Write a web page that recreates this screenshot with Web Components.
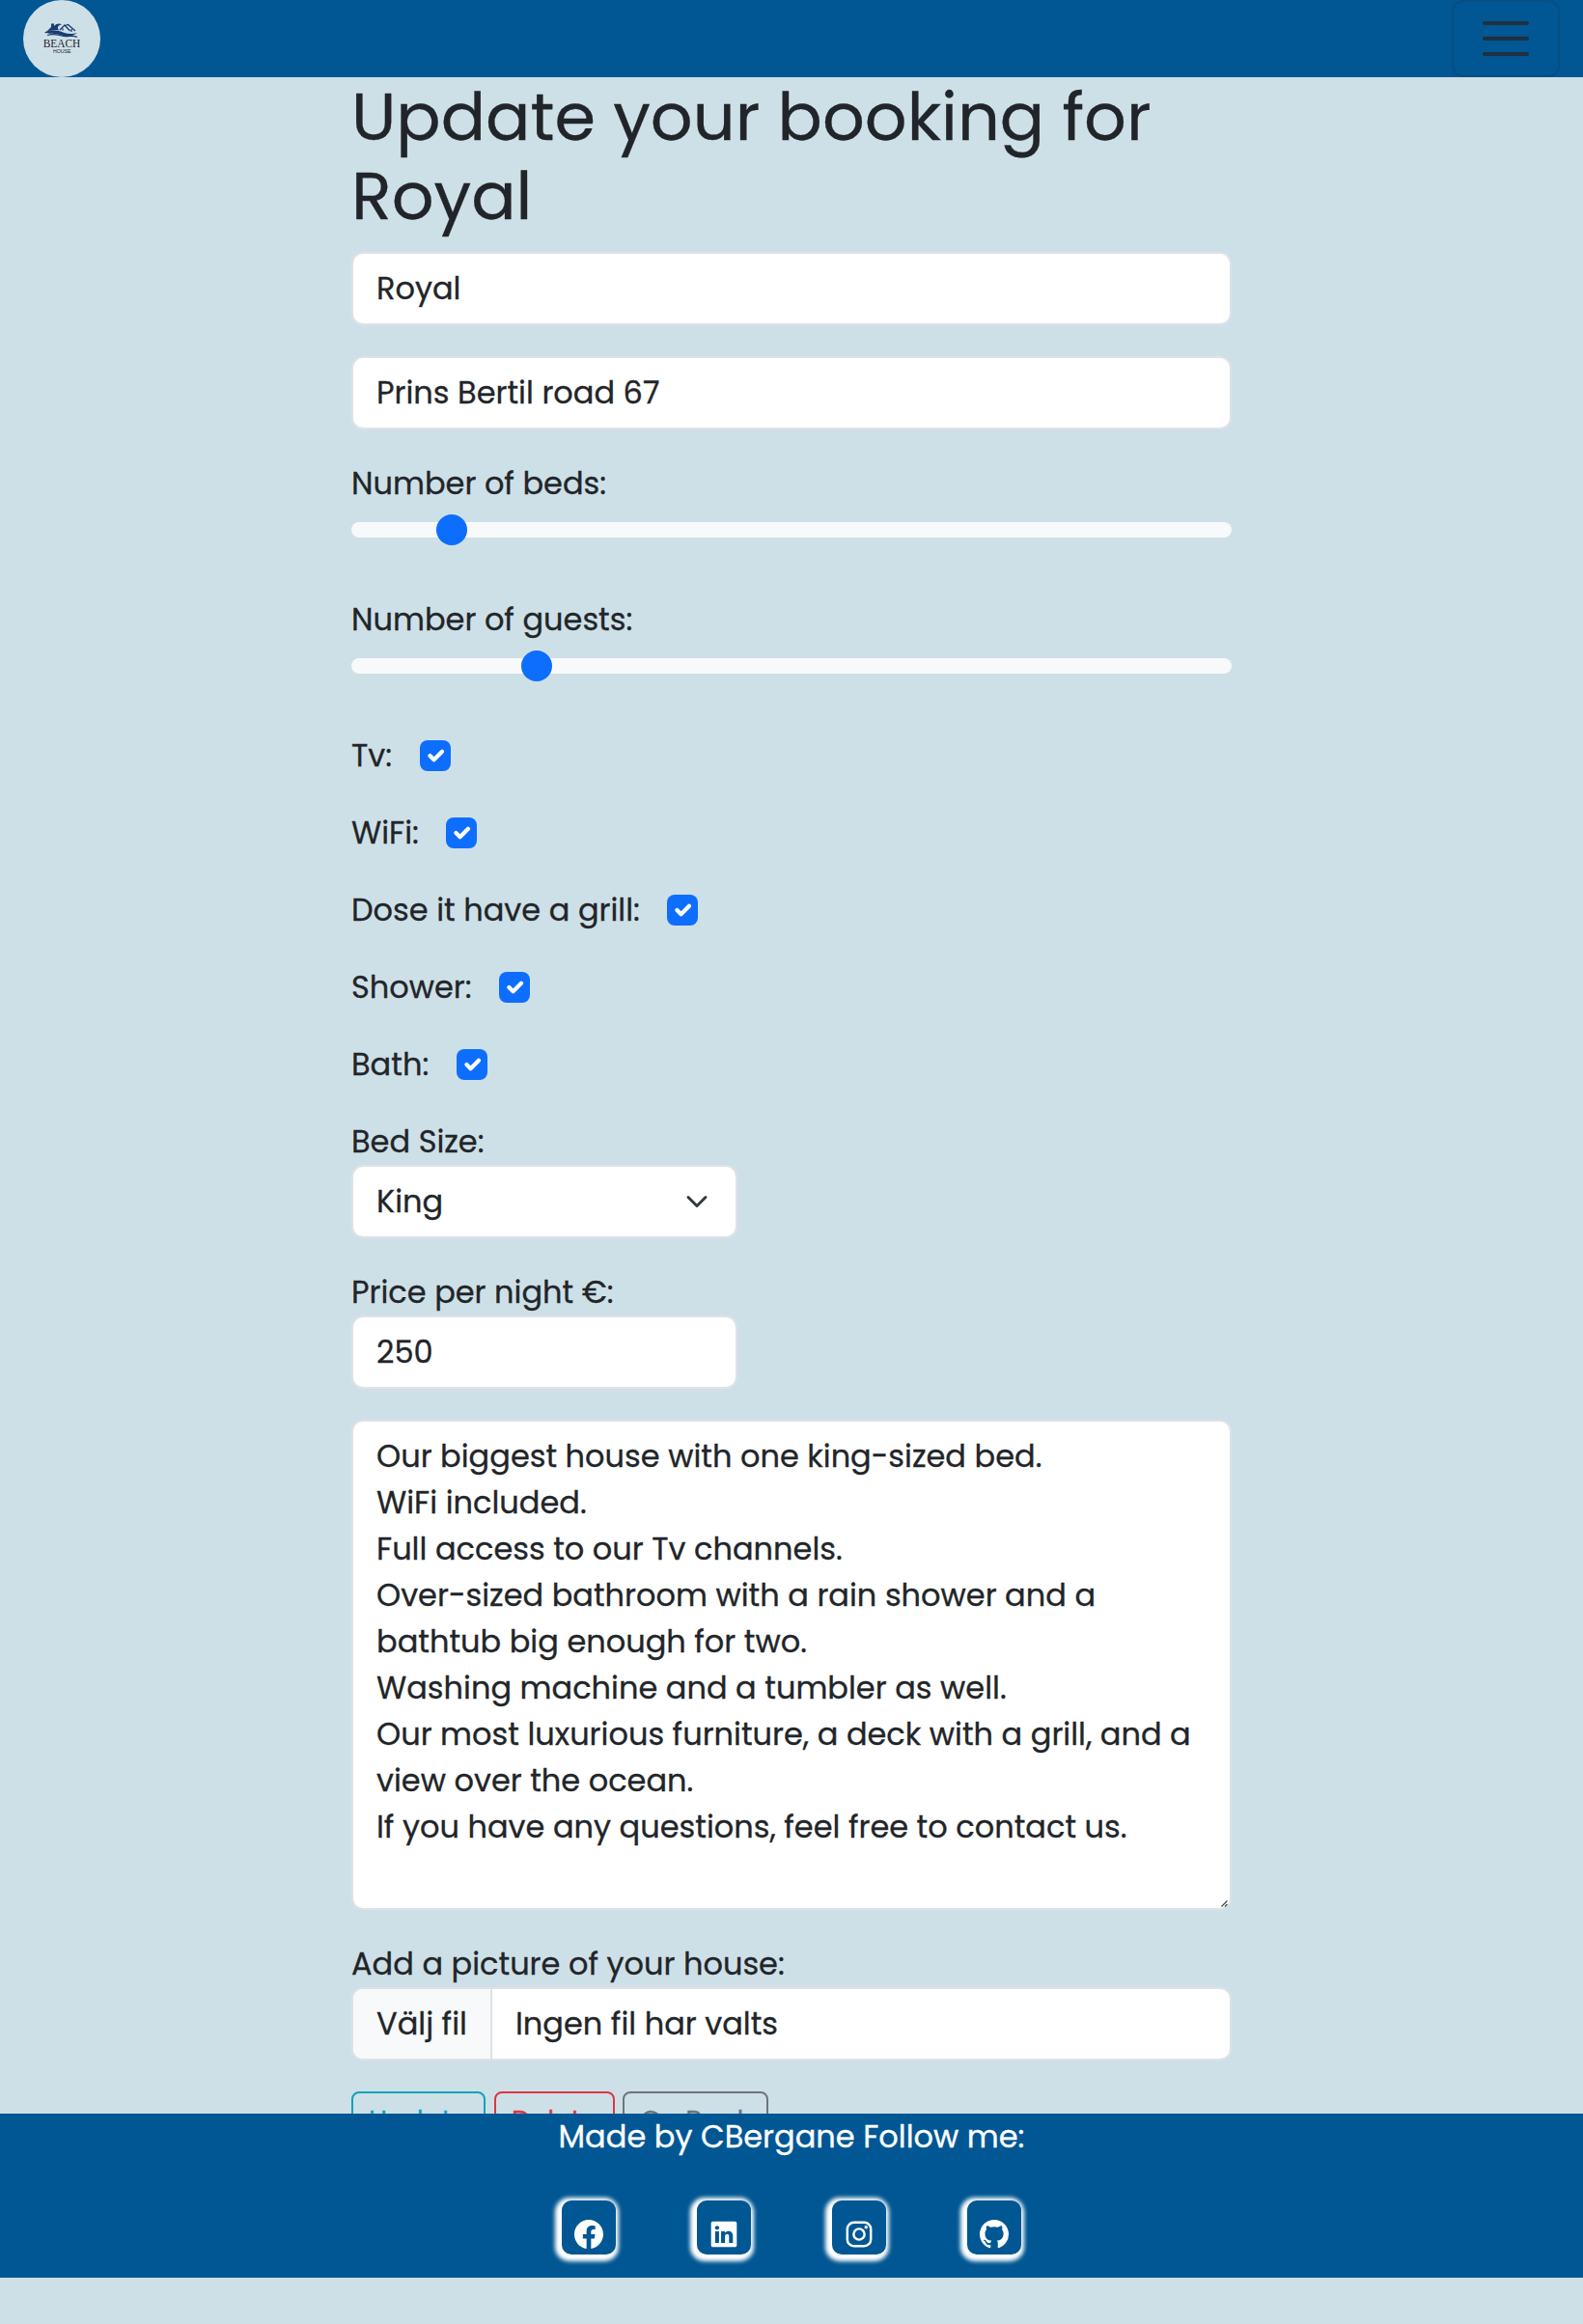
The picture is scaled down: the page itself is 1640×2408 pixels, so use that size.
<!DOCTYPE html>
<html lang="en">
<head>
<meta charset="utf-8">
<title>Beach House</title>
<style>
  html, body { margin: 0; background: #cee0e7; }
  body {
    font: 400 32px/48px Poppins, Inter, "Liberation Sans", sans-serif;
    -webkit-text-stroke: .3px currentColor;
    color: #212529;
    height: 2408px;
    overflow: hidden;
  }
</style>
</head>
<body>
<beach-page></beach-page>
<script>
const define = (name, html, init) => {
  const tpl = document.createElement('template');
  tpl.innerHTML = html;
  customElements.define(name, class extends HTMLElement {
    constructor() {
      super();
      this.attachShadow({ mode: 'open' }).append(tpl.content.cloneNode(true));
    }
    connectedCallback() { if (init) init.call(this, this.shadowRoot); }
  });
};

define('brand-logo', `<style>
  :host { display: block; width: 80px; height: 80px; border-radius: 50%; background: #cee0e7; }
  svg { display: block; }
  text { -webkit-text-stroke: 0; }
</style>
<svg width="80" height="80" viewBox="0 0 80 80">
  <path fill="#1b3c73" d="M24 33L29 28V24.500H32V27C35 24 38 24 40 25.500C36 26 34.500 29 37.500 31.500C33 30.500 28 31 24 33Z"/>
  <path fill="none" stroke="#1b3c73" stroke-width="1.300" d="M38 31L43 26L48.500 32M44.500 26.200L46.500 25.500L54 32M41 29.500v2M50 30v3"/>
  <path fill="#1b3c73" d="M22 33.500C30 29.500 37 32 42 33.800C47 35.500 52 35.500 56 34C50 39 43 37.500 37 35.700C31 34 26 36 22 33.500Z"/>
  <path fill="none" stroke="#1b3c73" stroke-width="1.200" d="M25 36.500C32 34 37 36.500 42 37.500C47 38.300 52 36 56 38.500"/>
  <text x="20.800" y="49" font-family="Liberation Serif" font-size="12" fill="#1b222b" textLength="38.500" lengthAdjust="spacingAndGlyphs">BEACH</text>
  <text x="31" y="54.700" font-family="Liberation Sans" font-size="5.500" fill="#1b222b" textLength="18.500" lengthAdjust="spacingAndGlyphs">HOUSE</text>
</svg>`);

define('menu-toggler', `<style>
  :host { display: flex; flex-direction: column; align-items: center; justify-content: center; gap: 12px;
    width: 112px; height: 80px; box-sizing: border-box; border: 2px solid #044f84; border-radius: 12px; }
  i { display: block; width: 48px; height: 4px; border-radius: 2px; background: #1f303f; }
</style><i></i><i></i><i></i>`);

define('nav-bar', `<style>
  :host { display: flex; justify-content: space-between; height: 80px; padding: 0 24px; background: #005793; }
</style><brand-logo></brand-logo><menu-toggler></menu-toggler>`);

define('form-label', `<style>
  :host { display: block; white-space: nowrap; }
</style><slot></slot>`);

define('form-control', `<style>
  :host { display: flex; align-items: center; justify-content: space-between; box-sizing: border-box; height: 76px;
    padding: 0 24px; background: #fff; border: 2px solid #dee2e6; border-radius: 12px; }
  :host([small]) { width: 400px; }
  svg { display: none; margin-right: 4px; }
  :host([select]) svg { display: block; }
</style><span><slot></slot></span>
<svg width="24" height="24" viewBox="0 0 16 16" fill="none" stroke="#343a40" stroke-width="2" stroke-linecap="round" stroke-linejoin="round"><path d="m2 5 6 6 6-6"/></svg>`);

define('form-range', `<style>
  :host { display: block; height: 141px; }
  .box { display: flex; align-items: center; height: 48px; }
  .track { display: flex; align-items: center; width: 100%; height: 16px; border-radius: 16px; background: #f8f9fa; }
  .thumb { width: 32px; height: 32px; border-radius: 50%; background: #0d6efd; }
</style><form-label><slot></slot></form-label><div class="box"><div class="track"><div class="thumb"></div></div></div>`, function (root) {
  root.querySelector('.thumb').style.marginLeft = this.getAttribute('value') + 'px';
});

define('form-check', `<style>
  :host { display: flex; align-items: center; height: 48px; margin-bottom: 32px; }
  .label { flex: none; white-space: nowrap; }
  .box { box-sizing: border-box; width: 32px; height: 32px; padding: 2px; border-radius: 8px; background: #0d6efd; }
  svg { display: block; }
</style><div class="label"><slot></slot></div>
<div class="box"><svg width="28" height="28" viewBox="0 0 20 20" fill="none" stroke="#fff" stroke-width="3" stroke-linecap="round" stroke-linejoin="round"><path d="m6 10 3 3 6-6"/></svg></div>`, function (root) {
  root.querySelector('.label').style.width = this.getAttribute('label-width') + 'px';
});

define('text-area', `<style>
  :host { display: flex; justify-content: space-between; box-sizing: border-box; height: 508px; padding: 12px 0 0 24px;
    background: #fff; border: 2px solid #dee2e6; border-radius: 12px; }
  .text { white-space: pre-line; }
  svg { align-self: flex-end; margin: 0 2px 1px 0; }
</style><div class="text"><slot></slot></div>
<svg width="7" height="7" viewBox="0 0 7 7" stroke="#444" stroke-width="1.200"><path d="M.5 6.500 6.500.5M4 6.500 6.500 4"/></svg>`);

define('file-input', `<style>
  :host { display: flex; box-sizing: border-box; height: 76px; background: #fff; border: 2px solid #dee2e6;
    border-radius: 12px; }
  .pick { box-sizing: border-box; width: 144px; padding: 12px 0 12px 24px; background: #f8f9fa; white-space: nowrap;
    border-right: 2px solid #dee2e6; border-radius: 10px 0 0 10px; }
  .name { padding: 12px 24px; }
</style><div class="pick"><slot name="pick"></slot></div><div class="name"><slot></slot></div>`);

define('outline-button', `<style>
  :host { display: block; box-sizing: border-box; height: 62px; padding: 8px 0; border: 2px solid var(--c);
    border-radius: 8px; color: var(--c); font-size: 28px; line-height: 42px; text-align: center; white-space: nowrap; }
</style><slot></slot>`, function () {
  this.style.width = this.getAttribute('width') + 'px';
});

define('booking-form', `<style>
  :host { display: block; width: 912px; margin: 0 auto; }
  h1 { margin: 0 0 17px; font-size: 68.600px; line-height: 82px; font-weight: 400; }
  form-control, text-area, file-input { margin-bottom: 32px; }
  .buttons { display: flex; }
  .buttons :nth-child(2) { margin: 0 8px 0 9px; }
</style>
<h1>Update your booking for Royal</h1>
<form-control>Royal</form-control>
<form-control>Prins Bertil road 67</form-control>
<form-range value="88">Number of beds:</form-range>
<form-range value="176">Number of guests:</form-range>
<form-check label-width="71">Tv:</form-check>
<form-check label-width="98">WiFi:</form-check>
<form-check label-width="327">Dose it have a grill:</form-check>
<form-check label-width="153">Shower:</form-check>
<form-check label-width="109">Bath:</form-check>
<form-label>Bed Size:</form-label>
<form-control small select>King</form-control>
<form-label>Price per night €:</form-label>
<form-control small>250</form-control>
<text-area>Our biggest house with one king-sized bed.
WiFi included.
Full access to our Tv channels.
Over-sized bathroom with a rain shower and a
bathtub big enough for two.
Washing machine and a tumbler as well.
Our most luxurious furniture, a deck with a grill, and a
view over the ocean.
If you have any questions, feel free to contact us.</text-area>
<form-label>Add a picture of your house:</form-label>
<file-input><span slot="pick">Välj fil</span>Ingen fil har valts</file-input>
<div class="buttons">
  <outline-button width="139" style="--c:#0fa3b9">Update</outline-button>
  <outline-button width="125" style="--c:#dc3545">Delete</outline-button>
  <outline-button width="151" style="--c:#6c757d">Go Back</outline-button>
</div>`);

const ICONS = {
  facebook: '<path d="M16 8.049c0-4.446-3.582-8.050-8-8.050C3.580 0-.002 3.603-.002 8.050c0 4.017 2.926 7.347 6.750 7.951v-5.625h-2.030V8.050H6.750V6.275c0-2.017 1.195-3.131 3.022-3.131.876 0 1.791.157 1.791.157v1.980h-1.009c-.993 0-1.303.621-1.303 1.258v1.510h2.218l-.354 2.326H9.250V16c3.824-.604 6.750-3.934 6.750-7.951"/>',
  linkedin: '<path transform="translate(.9 .9) scale(.8875)" d="M0 1.146C0 .513.526 0 1.175 0h13.650C15.474 0 16 .513 16 1.146v13.708c0 .633-.526 1.146-1.175 1.146H1.175C.526 16 0 15.487 0 14.854zm4.943 12.248V6.169H2.542v7.225zm-1.200-8.212c.837 0 1.358-.554 1.358-1.248-.015-.709-.520-1.248-1.342-1.248S2.400 3.226 2.400 3.934c0 .694.521 1.248 1.327 1.248zm4.908 8.212V9.359c0-.216.016-.432.080-.586.173-.431.568-.878 1.232-.878.869 0 1.216.662 1.216 1.634v3.865h2.401V9.250c0-2.220-1.184-3.252-2.764-3.252-1.274 0-1.845.700-2.165 1.193v.025h-.016l.016-.025V6.169h-2.400c.030.678 0 7.225 0 7.225z"/>',
  instagram: '<g fill="none" stroke="#fff" stroke-width="1.300"><rect x="1.500" y="1.500" width="13" height="13" rx="3.600"/><circle cx="8" cy="8" r="3"/></g><circle cx="11.850" cy="4.150" r=".9"/>',
  github: '<path d="M8 0C3.580 0 0 3.580 0 8c0 3.540 2.290 6.530 5.470 7.590.4.070.55-.17.55-.38 0-.19-.010-.820-.010-1.490-2.010.37-2.530-.49-2.690-.94-.090-.23-.48-.94-.820-1.130-.28-.15-.68-.52-.010-.53.63-.010 1.080.58 1.230.82.72 1.210 1.870.87 2.330.66.070-.52.28-.87.51-1.070-1.780-.2-3.640-.89-3.640-3.950 0-.87.31-1.590.82-2.150-.080-.2-.36-1.020.080-2.120 0 0 .67-.21 2.200.82.64-.18 1.320-.27 2-.27s1.360.090 2 .27c1.530-1.040 2.200-.82 2.200-.82.44 1.100.16 1.920.080 2.120.51.56.82 1.270.82 2.150 0 3.070-1.870 3.750-3.650 3.950.29.25.54.73.54 1.480 0 1.070-.010 1.930-.010 2.200 0 .21.15.46.55.38A8.010 8.010 0 0 0 16 8c0-4.420-3.580-8-8-8"/>'
};
define('social-link', `<style>
  :host { display: flex; justify-content: center; box-sizing: border-box; width: 56px; height: 56px; padding-top: 20px;
    border-radius: 10px; background: #005793; box-shadow: -2px 2px 4px 5px #fff; }
  svg { display: block; flex: none; fill: #fff; }
</style><svg width="30" height="30" viewBox="0 0 16 16"></svg>`, function (root) {
  root.querySelector('svg').innerHTML = ICONS[this.getAttribute('icon')];
});

define('page-footer', `<style>
  :host { display: flex; flex-direction: column; align-items: center; gap: 42px; height: 170px; background: #005793; color: #fff;
    -webkit-text-stroke-color: #fff; }
  .links { display: flex; gap: 84px; }
</style>
<div>Made by CBergane Follow me:</div>
<div class="links"><social-link icon="facebook"></social-link><social-link icon="linkedin"></social-link><social-link icon="instagram"></social-link><social-link icon="github"></social-link></div>`);

/* The form runs on under the footer, which is painted over its last row. */
define('beach-page', `<style>
  :host { display: flex; flex-direction: column; height: 2360px; }
  nav-bar, page-footer { flex: none; }
  page-footer { position: relative; z-index: 1; }
  main { flex: 1; min-height: 0; }
</style><nav-bar></nav-bar><main><booking-form></booking-form></main><page-footer></page-footer>`);
</script>
</body>
</html>
